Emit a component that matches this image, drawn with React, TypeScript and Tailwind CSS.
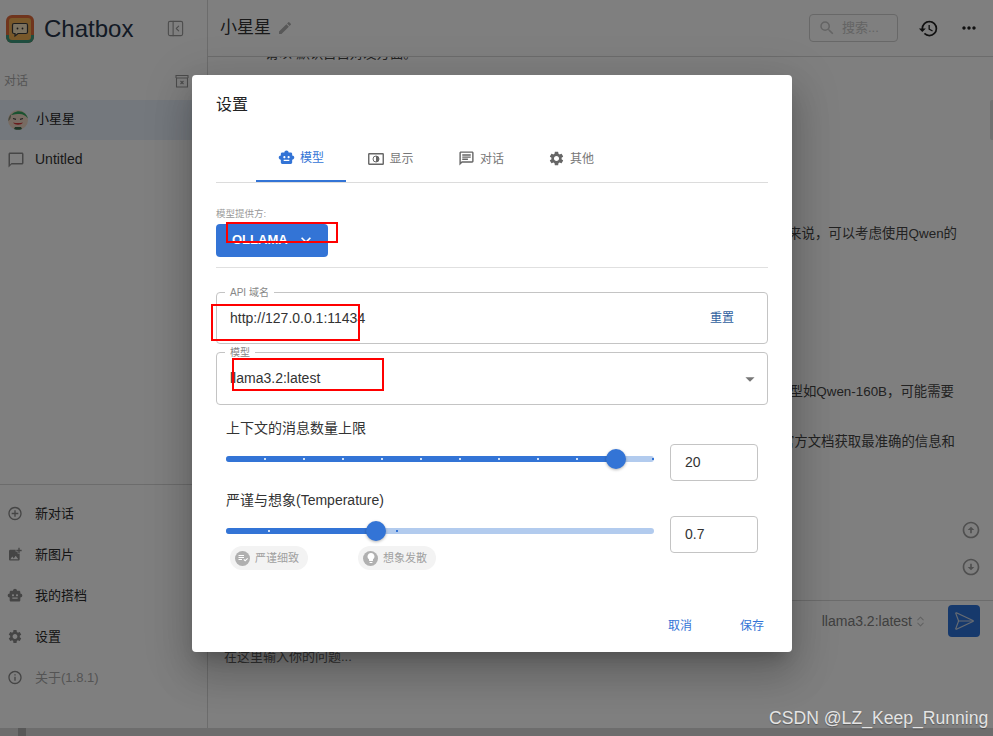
import React from "react";
import {
  MdAddCircleOutline,
  MdAddPhotoAlternate,
  MdArrowDropDown,
  MdChatBubbleOutline,
  MdEdit,
  MdInfoOutline,
  MdKeyboardArrowDown,
  MdLightbulb,
  MdMoreHoriz,
  MdOutlineArrowCircleDown,
  MdOutlineArrowCircleUp,
  MdOutlineChat,
  MdPlaylistAddCheck,
  MdRestore,
  MdSearch,
  MdSettings,
  MdSmartToy,
} from "react-icons/md";
import { ChevronsUpDown, PanelLeftClose, SendHorizontal } from "lucide-react";

const FONT = "font-['Liberation_Sans','Noto_Sans_CJK_SC',sans-serif]";

function Logo() {
  return (
    <svg width="28" height="28" viewBox="0 0 28 28">
      <rect x="0" y="0" width="28" height="28" rx="6" fill="#e06a3a" />
      <path d="M0 20h28v2a6 6 0 0 1-6 6H6a6 6 0 0 1-6-6z" fill="#3f9a7e" />
      <rect x="3" y="3" width="22" height="22" rx="3" fill="#f0b155" />
      <path d="M8 8.500h12a1.500 1.500 0 0 1 1.500 1.500v7a1.500 1.500 0 0 1-1.500 1.500h-8l-3 2.500v-2.500h-1a1.500 1.500 0 0 1-1.500-1.500v-7a1.500 1.500 0 0 1 1.500-1.500z" fill="#f7e4c0" stroke="#3b3b3b" strokeWidth="1.200" />
      <circle cx="11.500" cy="13.500" r="0.900" fill="#333" />
      <circle cx="16.500" cy="13.500" r="0.900" fill="#333" />
    </svg>
  );
}

function Avatar() {
  return (
    <svg width="20" height="20" viewBox="0 0 20 20">
      <circle cx="10" cy="10" r="10" fill="#efd6c4" />
      <path d="M3 5a10 10 0 0 1 14-1.500c1.500 1.500 2.500 3 2.800 5-2-3-5-4.500-8-4.500-3 0-6.500.5-8.800 1z" fill="#35a561" />
      <path d="M0.300 11c0-3 1-5 2.700-6.500.5 2-.5 5-2.700 6.500z" fill="#8a8f7a" />
      <path d="M5 12.500c2 3 8 3 10 0-3 .8-7 .8-10 0z" fill="#d2383a" />
      <path d="M5 8.500l3 .8M15 8.500l-3 .8" stroke="#444" strokeWidth="1.200" fill="none" />
      <path d="M6 19a10 10 0 0 0 8 0l-1-2H7z" fill="#3a6a4a" />
    </svg>
  );
}

function ArchiveX() {
  return (
    <svg width="14" height="14" viewBox="0 0 14 14" fill="none" stroke="#999" strokeWidth="1.100">
      <path d="M0.500 1.500h13M1.500 4h11v9h-11zM1 1.500v2.500M13 1.500v2.500" />
      <path d="M5.500 7l3 3M8.500 7l-3 3" />
    </svg>
  );
}

function DisplayIcon() {
  return (
    <svg width="16" height="16" viewBox="0 0 16 16" fill="none">
      <rect x="0.750" y="2.750" width="14.500" height="10.500" stroke="#666" strokeWidth="1.400" rx="0.500" />
      <circle cx="8" cy="8" r="3" stroke="#666" strokeWidth="1" />
      <path d="M8 5a3 3 0 0 1 0 6z" fill="#666" />
    </svg>
  );
}

function NavItem({ icon, label, muted }: { icon: React.ReactNode; label: string; muted?: boolean }) {
  return (
    <div className={`flex h-[41px] items-center pl-[7px] text-[13px] ${muted ? "text-[#a8a8a8]" : "text-[#2a2a2a]"}`}>
      <span className="flex w-[16px] justify-center text-[#8a8a8a]">{icon}</span>
      <span className="ml-[12px]">{label}</span>
    </div>
  );
}

function Sidebar() {
  return (
    <aside className="flex w-[208px] shrink-0 flex-col border-r border-[#d8d8d8]">
      <div className="flex h-[57px] items-center pl-[6px]">
        <Logo />
        <span className="ml-[10px] text-[24px] text-[#26344a]">Chatbox</span>
        <PanelLeftClose className="ml-[33px] text-[#999]" size={19} strokeWidth={1.400} />
      </div>
      <div className="mt-[15px] flex h-[18px] items-center justify-between pl-[4px] pr-[18px] text-[12px] text-[#aaa]">
        <span>对话</span>
        <ArchiveX />
      </div>
      <div className="mt-[10px] flex h-[40px] items-center bg-[#e8f1fa] pl-[8px] text-[13px] text-[#1f1f1f]">
        <Avatar />
        <span className="-mt-[2px] ml-[8px]">小星星</span>
      </div>
      <div className="flex h-[40px] items-center pl-[7px] text-[14px] text-[#333]">
        <MdChatBubbleOutline size={18} className="text-[#8f8f8f]" />
        <span className="-mt-[2px] ml-[10px]">Untitled</span>
      </div>
      <div className="flex-1" />
      <div className="border-t border-[#d8d8d8] pb-[30px] pt-[8px]">
        <NavItem icon={<MdAddCircleOutline size={17} />} label="新对话" />
        <NavItem icon={<MdAddPhotoAlternate size={17} />} label="新图片" />
        <NavItem icon={<MdSmartToy size={17} />} label="我的搭档" />
        <NavItem icon={<MdSettings size={17} />} label="设置" />
        <NavItem icon={<MdInfoOutline size={17} />} label="关于(1.8.1)" muted />
      </div>
    </aside>
  );
}

function ChatPane() {
  return (
    <main className="flex min-w-0 flex-1 flex-col">
      <header className="relative z-10 flex h-[57px] shrink-0 items-center border-b border-[#d8d8d8] bg-white pl-[12px]">
        <span className="text-[17px] text-[#333]">小星星</span>
        <MdEdit size={16} className="ml-[6px] text-[#b0b0b0]" />
        <div className="ml-auto flex h-[28px] w-[89px] items-center rounded-[4px] border border-[#d0d0d0] pl-[8px] text-[13px] text-[#c8c8c8]">
          <MdSearch size={18} />
          <span className="ml-[6px]">搜索...</span>
        </div>
        <MdRestore size={21} className="ml-[20px] text-[#222]" />
        <MdMoreHoriz size={20} className="ml-[20px] mr-[14px] text-[#222]" />
      </header>
      <div className="relative min-h-0 flex-1 overflow-hidden text-[13.4px] leading-5 text-[#444]">
        <p className="-mt-[13px] whitespace-nowrap pl-[57px]">请以“默认自自对发方面。</p>
        <p className="mt-[160px] whitespace-nowrap pr-[36px] text-right">对于中文用户来说，可以考虑使用Qwen的</p>
        <p className="mt-[138px] whitespace-nowrap pr-[39px] text-right">更大的模型如Qwen-160B，可能需要</p>
        <p className="mt-[30px] whitespace-nowrap pr-[38px] text-right">建议查看官方文档获取最准确的信息和</p>
        <MdOutlineArrowCircleUp size={20} className="absolute right-[12px] top-[463px] text-[#a0a0a0]" />
        <MdOutlineArrowCircleDown size={20} className="absolute right-[12px] top-[500px] text-[#a0a0a0]" />
        <div className="absolute right-0 top-[43px] h-[40px] w-[3px] rounded-l-[2px] bg-[#e0e0e0]" />
      </div>
      <footer className="h-[128px] shrink-0 border-t border-[#d8d8d8] pl-[16px] pr-[13px]">
        <div className="flex h-[36px] items-end justify-end">
          <span className="flex items-center pb-[5px] text-[14px] text-[#808080]">
            llama3.2:latest
            <ChevronsUpDown size={13} className="ml-[2px] text-[#c4c4c4]" />
          </span>
          <span className="ml-[21px] flex h-[32px] w-[32px] items-center justify-center rounded-[4px] bg-[#2d72d9] text-[#cfd8e4]">
            <SendHorizontal size={22} strokeWidth={1.300} />
          </span>
        </div>
        <p className="mt-[10px] text-[13px] text-[#666]">在这里输入你的问题...</p>
      </footer>
    </main>
  );
}

function Slider({ value, marks, rightDot }: { value: number; marks: number[]; rightDot?: boolean }) {
  return (
    <div className="relative h-[6px] w-[428px] rounded-full bg-[#b2cbee]">
      <div className="h-[6px] rounded-full bg-[#3374d6]" style={{ width: value }} />
      {marks.map((m) => (
        <span
          key={m}
          className={`absolute top-[2px] h-[2px] w-[2px] ${m < value ? "bg-[#cfe0f7]" : "bg-[#3374d6]"}`}
          style={{ left: m }}
        />
      ))}
      {rightDot && <span className="absolute right-0 top-[2px] h-[2px] w-[2px] bg-[#3374d6]" />}
      <span
        className="absolute -top-[7px] h-[20px] w-[20px] -translate-x-1/2 rounded-full bg-[#3374d6] shadow-[0_1px_3px_rgba(0,0,0,0.3)]"
        style={{ left: value }}
      />
    </div>
  );
}

function NumberBox({ value }: { value: string }) {
  return (
    <div className="flex h-[37px] w-[88px] items-center rounded-[4px] border border-[#c4c4c4] pl-[14px] text-[14px] text-[#333]">
      {value}
    </div>
  );
}

function Chip({ icon, label }: { icon: React.ReactNode; label: string }) {
  return (
    <div className="flex h-[24px] w-[78px] items-center rounded-full bg-[#f3f3f3] pl-[5px] text-[11px] text-[#a0a0a0]">
      <span className="flex h-[15px] w-[15px] items-center justify-center rounded-full bg-[#b0b0b0] text-white">{icon}</span>
      <span className="ml-[5px]">{label}</span>
    </div>
  );
}

function Tab({ icon, label, active }: { icon: React.ReactNode; label: string; active?: boolean }) {
  return (
    <div
      className={`flex h-[47px] w-[90px] items-center justify-center gap-[5px] text-[12px] ${
        active ? "border-b-2 border-[#3374d6] text-[#3374d6]" : "text-[#777]"
      }`}
    >
      {icon}
      <span>{label}</span>
    </div>
  );
}

function SettingsDialog() {
  return (
    <div className="absolute left-[192px] top-[75px] flex h-[577px] w-[600px] flex-col rounded-[4px] bg-white px-[24px] shadow-[0_11px_15px_-7px_rgba(0,0,0,0.2),0_24px_38px_3px_rgba(0,0,0,0.14),0_9px_46px_8px_rgba(0,0,0,0.12)]">
      <h2 className="mt-[18px] h-[24px] text-[16px] leading-6 text-[#222]">设置</h2>
      <div className="mt-[18px] flex border-b border-[#dcdcdc] pl-[40px]">
        <Tab active icon={<MdSmartToy size={17} />} label="模型" />
        <Tab icon={<DisplayIcon />} label="显示" />
        <Tab icon={<MdOutlineChat size={17} className="text-[#666]" />} label="对话" />
        <Tab icon={<MdSettings size={17} className="text-[#666]" />} label="其他" />
      </div>
      <div className="mt-[25px] h-[12px] text-[9.500px] leading-3 text-[#999]">模型提供方:</div>
      <div className="mt-[4px] flex h-[33px] w-[112px] items-center rounded-[4px] bg-[#3374d6] pb-[1px] pl-[16px] text-[13px] font-bold text-white">
        OLLAMA
        <MdKeyboardArrowDown size={20} className="ml-[8px]" />
      </div>
      <div className="mt-[10px] border-t border-[#e0e0e0]" />
      <div className="relative mt-[24px] flex h-[52px] items-center rounded-[4px] border border-[#c4c4c4] pl-[13px] pr-[33px] text-[14px] text-[#333]">
        <span className="absolute -top-[6px] left-[8px] bg-white px-[5px] text-[10px] leading-[11px] text-[#888]">API 域名</span>
        http://127.0.0.1:11434
        <span className="ml-auto text-[12px] text-[#2f5f9e]">重置</span>
      </div>
      <div className="relative mt-[8px] flex h-[53px] items-center rounded-[4px] border border-[#c4c4c4] pl-[13px] pr-[6px] text-[14px] text-[#333]">
        <span className="absolute -top-[6px] left-[8px] bg-white px-[5px] text-[10px] leading-[11px] text-[#888]">模型</span>
        llama3.2:latest
        <MdArrowDropDown size={22} className="ml-auto text-[#777]" />
      </div>
      <div className="mt-[14px] pl-[10px] text-[14px] leading-[18px] text-[#333]">上下文的消息数量上限</div>
      <div className="mt-[7px] flex h-[37px] items-center px-[10px]">
        <div className="-mt-[7px]">
          <Slider value={390} marks={[38, 77, 116, 155, 194, 233, 272, 311, 350]} rightDot />
        </div>
        <div className="ml-auto">
          <NumberBox value="20" />
        </div>
      </div>
      <div className="mt-[10px] pl-[10px] text-[14px] leading-[18px] text-[#333]">严谨与想象(Temperature)</div>
      <div className="mt-[7px] flex h-[37px] items-center px-[10px]">
        <div className="-mt-[7px]">
          <Slider value={150} marks={[42, 170]} />
        </div>
        <div className="ml-auto">
          <NumberBox value="0.7" />
        </div>
      </div>
      <div className="-mt-[7px] flex gap-[50px] pl-[14px]">
        <Chip icon={<MdPlaylistAddCheck size={12} />} label="严谨细致" />
        <Chip icon={<MdLightbulb size={12} />} label="想象发散" />
      </div>
      <div className="mt-auto flex h-[34px] justify-end gap-[48px] pr-[4px] text-[12px] leading-4 text-[#3374d6]">
        <span>取消</span>
        <span>保存</span>
      </div>
    </div>
  );
}

export default function App() {
  return (
    <div className={`${FONT} relative h-[736px] w-[993px] overflow-hidden bg-white`}>
      <div className="flex h-[728px]">
        <Sidebar />
        <ChatPane />
      </div>
      <div className="h-[8px] bg-[#dadada] pl-[18px]">
        <div className="h-[8px] w-[8px] bg-[#b0b0b0]" />
      </div>
      <div className="absolute inset-0 z-20 bg-black/50" />
      <div className="absolute inset-0 z-30">
        <SettingsDialog />
        <div className="absolute left-[226px] top-[222px] h-[21px] w-[112px] border-2 border-[#ff0000]" />
        <div className="absolute left-[211px] top-[304px] h-[37px] w-[149px] border-2 border-[#ff0000]" />
        <div className="absolute left-[232px] top-[358px] h-[33px] w-[152px] border-2 border-[#ff0000]" />
        <div className="absolute left-[769px] top-[706px] whitespace-nowrap text-[17.600px] leading-6 text-[#e4e4e4] [text-shadow:0_1px_1px_rgba(0,0,0,0.3)]">
          CSDN @LZ_Keep_Running
        </div>
      </div>
    </div>
  );
}
